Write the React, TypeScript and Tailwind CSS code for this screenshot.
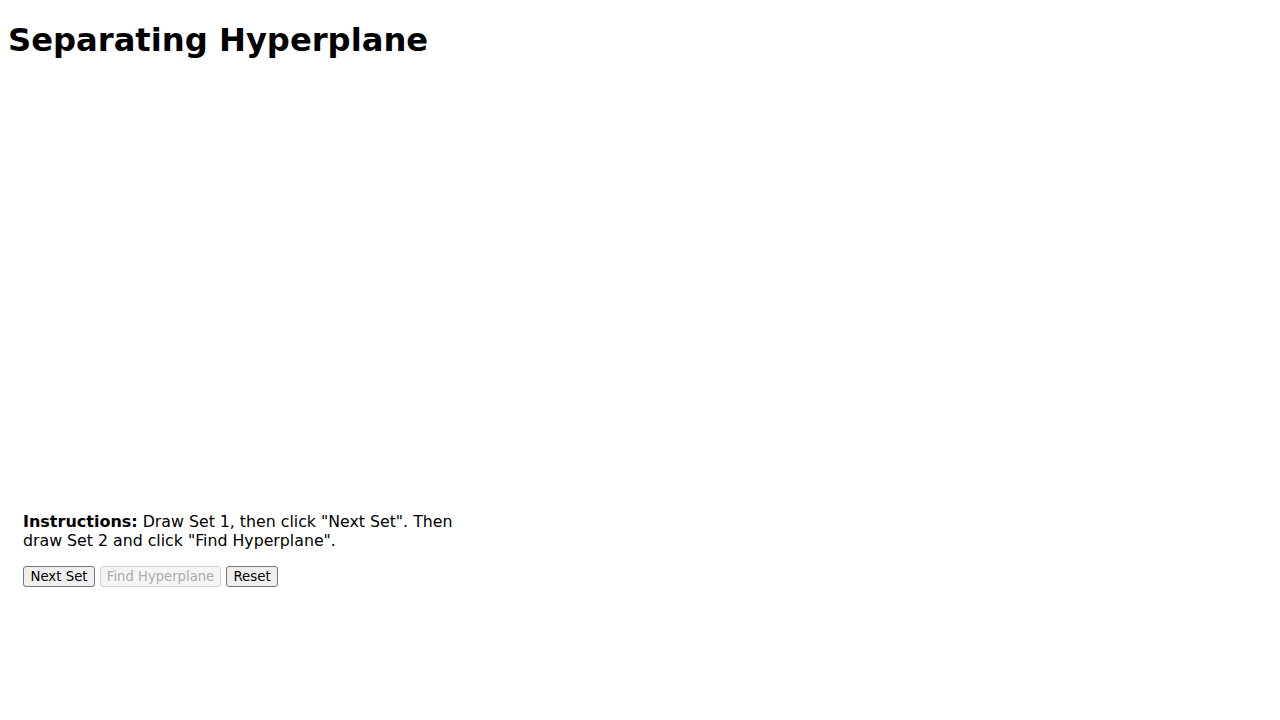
import React from "react";

const btn =
  "inline-flex h-[21px] items-center justify-center rounded-[3px] border border-[#767676] bg-[#efefef] px-0 align-middle text-[13.3333px] leading-[15px] text-black";

export default function App() {
  return (
    <div className="m-2 font-['DejaVu_Sans',sans-serif] text-black">
      <h1 className="mt-[22.44px] mb-[22.44px] text-[32.2px] font-bold leading-[37px]">Separating Hyperplane</h1>
      <div className="h-[399px] w-[400px]" />
      <div className="w-[470px] p-[15px]">
        <p className="my-4 text-[15.77px] leading-[19px]">
          <strong className="text-[16px]">Instructions:</strong> Draw Set 1, then click "Next Set". Then draw Set
          2 and click "Find Hyperplane".
        </p>
        <div className="flex gap-[5px]">
          <button className={`${btn} w-[72px]`}>Next Set</button>
          <button
            disabled
            className="inline-flex h-[21px] w-[121px] items-center justify-center rounded-[3px] border border-[#d3d3d3] bg-[#f5f5f5] px-0 text-[13.2px] leading-[15px] text-[#ababab]"
          >
            Find Hyperplane
          </button>
          <button className={`${btn} w-[52px]`}>Reset</button>
        </div>
      </div>
    </div>
  );
}
